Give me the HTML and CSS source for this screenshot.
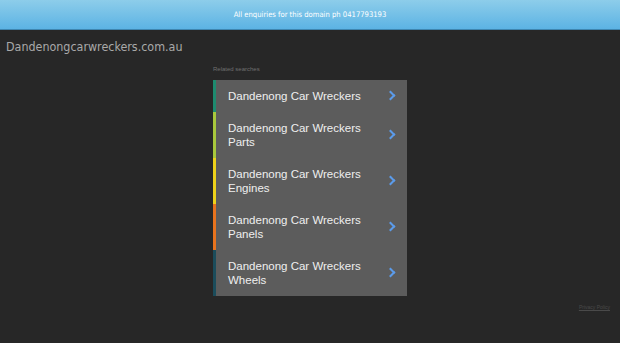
FILE: index.html
```html
<!DOCTYPE html>
<html lang="en">
<head>
    <meta charset="UTF-8">
    <meta name="viewport" content="width=device-width, initial-scale=1.0">
    <title>Dandenongcarwreckers.com.au</title>
    <link rel="stylesheet" href="styles.css">
</head>
<body>
    <!-- Top banner -->
    <div class="banner">All enquiries for this domain ph 0417793193</div>

    <div class="domain">Dandenongcarwreckers.com.au</div>

    <!-- Related searches -->
    <div class="related">
        <div class="related-title">Related searches</div>
        <ul class="links">
            <li class="c1"><a href="#">Dandenong Car Wreckers</a></li>
            <li class="c2"><a href="#">Dandenong Car Wreckers Parts</a></li>
            <li class="c3"><a href="#">Dandenong Car Wreckers Engines</a></li>
            <li class="c4"><a href="#">Dandenong Car Wreckers Panels</a></li>
            <li class="c5"><a href="#">Dandenong Car Wreckers Wheels</a></li>
        </ul>
    </div>

    <div class="footer"><a href="#">Privacy Policy</a></div>
</body>
</html>
```

FILE: styles.css
```css
body {
    margin: 0;
    background: #272727;
    font-family: "Liberation Sans", Arial, sans-serif;
    height: 343px;
    overflow: hidden;
}

.banner {
    height: 29px;
    line-height: 29px;
    background: linear-gradient(to bottom, #8dcdea, #5cb3e4);
    border-bottom: 1px solid #3f86b0;
    color: #fff;
    text-align: center;
    font-family: "DejaVu Sans Condensed", "DejaVu Sans", sans-serif;
    font-size: 7.6px;
}

.domain {
    height: 30px;
    box-sizing: border-box;
    padding: 10px 0 0 6px;
    line-height: 14px;
    color: #a9a9a9;
    font-family: "DejaVu Sans Condensed", "DejaVu Sans", sans-serif;
    font-size: 12.4px;
}

.related {
    width: 194px;
    margin: 0 auto;
}

.related-title {
    color: #6f6f6f;
    font-size: 6px;
    height: 20px;
    line-height: 18px;
}

.links {
    list-style: none;
    margin: 0;
    padding: 0;
    background: #5c5c5c;
}

.links li {
    border-left: 3px solid #1f8a6e;
    padding: 9px 0 9px 12px;
    position: relative;
}

.links a {
    display: block;
    color: #efefef;
    text-decoration: none;
    font-size: 11.5px;
    line-height: 14px;
    padding-right: 42px;
}

.links li::after {
    content: "";
    position: absolute;
    right: 13px;
    top: 50%;
    width: 5px;
    height: 5px;
    margin-top: -4px;
    border-top: 2px solid #5b9bea;
    border-right: 2px solid #5b9bea;
    transform: rotate(45deg);
}

.links li.c1 { border-left-color: #1e8b6f; }
.links li.c2 { border-left-color: #a8c83c; }
.links li.c3 { border-left-color: #eed21a; }
.links li.c4 { border-left-color: #e8731e; }
.links li.c5 { border-left-color: #1b4c5b; }

.footer {
    text-align: right;
    padding: 4px 10px 0 0;
    line-height: 8px;
}

.footer a {
    color: #4a4a4a;
    font-size: 5px;
    text-decoration: underline;
}
```
